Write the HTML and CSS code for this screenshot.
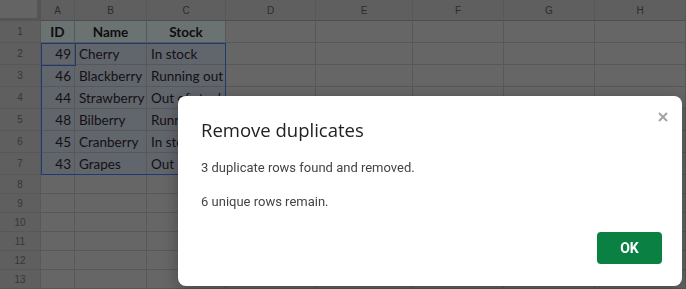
FILE: index.html
```html
<!DOCTYPE html>
<html lang="en">
<head>
  <meta charset="UTF-8">
  <meta name="viewport" content="width=device-width, initial-scale=1.0">
  <title>Remove duplicates</title>
  <link rel="stylesheet" href="styles.css">
</head>
<body>
  <div class="sheet">
    <div class="row head">
      <div class="corner"></div>
      <div>A</div><div>B</div><div>C</div><div>D</div><div>E</div><div>F</div><div>G</div><div>H</div>
    </div>
    <div class="row">
      <div class="num">1</div>
      <div class="hdr">ID</div><div class="hdr">Name</div><div class="hdr">Stock</div>
      <div></div><div></div><div></div><div></div><div></div>
    </div>
    <div class="row">
      <div class="num">2</div>
      <div class="sel right">49</div><div class="sel">Cherry</div><div class="sel">In stock</div>
      <div></div><div></div><div></div><div></div><div></div>
    </div>
    <div class="row">
      <div class="num">3</div>
      <div class="sel right">46</div><div class="sel">Blackberry</div><div class="sel">Running out</div>
      <div></div><div></div><div></div><div></div><div></div>
    </div>
    <div class="row">
      <div class="num">4</div>
      <div class="sel right">44</div><div class="sel">Strawberry</div><div class="sel">Out of stock</div>
      <div></div><div></div><div></div><div></div><div></div>
    </div>
    <div class="row">
      <div class="num">5</div>
      <div class="sel right">48</div><div class="sel">Bilberry</div><div class="sel">Running out</div>
      <div></div><div></div><div></div><div></div><div></div>
    </div>
    <div class="row">
      <div class="num">6</div>
      <div class="sel right">45</div><div class="sel">Cranberry</div><div class="sel">In stock</div>
      <div></div><div></div><div></div><div></div><div></div>
    </div>
    <div class="row">
      <div class="num">7</div>
      <div class="sel right">43</div><div class="sel">Grapes</div><div class="sel">Out of stock</div>
      <div></div><div></div><div></div><div></div><div></div>
    </div>
    <div class="row short">
      <div class="num">8</div>
      <div></div><div></div><div></div><div></div><div></div><div></div><div></div><div></div>
    </div>
    <div class="row short">
      <div class="num">9</div>
      <div></div><div></div><div></div><div></div><div></div><div></div><div></div><div></div>
    </div>
    <div class="row short">
      <div class="num">10</div>
      <div></div><div></div><div></div><div></div><div></div><div></div><div></div><div></div>
    </div>
    <div class="row short">
      <div class="num">11</div>
      <div></div><div></div><div></div><div></div><div></div><div></div><div></div><div></div>
    </div>
    <div class="row short">
      <div class="num">12</div>
      <div></div><div></div><div></div><div></div><div></div><div></div><div></div><div></div>
    </div>
    <div class="row short">
      <div class="num">13</div>
      <div></div><div></div><div></div><div></div><div></div><div></div><div></div><div></div>
    </div>

    <div class="selection"></div>
    <div class="active-cell"></div>
  </div>

  <div class="scrim">
    <div class="dialog">
      <svg class="close" viewBox="0 0 10 10" width="10" height="10">
        <path d="M1 1 L9 9 M9 1 L1 9" stroke="#a3a3a3" stroke-width="2" fill="none"/>
      </svg>
      <h2 class="dialog-title">Remove duplicates</h2>
      <p class="dialog-text">3 duplicate rows found and removed.</p>
      <p class="dialog-text">6 unique rows remain.</p>
      <div class="dialog-actions">
        <button class="btn-ok">OK</button>
      </div>
    </div>
  </div>
</body>
</html>
```

FILE: styles.css
```css
body {
  margin: 0;
  width: 686px;
  height: 289px;
  overflow: hidden;
  background: #666666;
  font-family: Lato, 'Liberation Sans', sans-serif;
}
.sheet {
  position: relative;
  display: flex;
  flex-direction: column;
}
.row {
  display: grid;
  grid-template-columns: 41px 34px 72px 79px 90px 97px 91px 91px 91px;
  height: 22px;
}
.row.short {
  height: 19px;
}
.row > div {
  box-sizing: border-box;
  display: flex;
  align-items: center;
  padding: 0 4px;
  white-space: nowrap;
  border-right: 1px solid #585858;
  border-bottom: 1px solid #585858;
  font-size: 13.5px;
  color: #141014;
}
.head {
  height: 21px;
}
.head > div {
  justify-content: center;
  background: #5f5f5f;
  border-bottom-color: #4e4e4e;
  font-family: 'Liberation Sans', Arial, sans-serif;
  font-size: 10px;
  color: #2c2c2c;
}
.head > .corner {
  background: #646464;
  border-right: 4px solid #555;
  border-bottom: 3px solid #555;
}
.row > .num {
  justify-content: center;
  background: #5f5f5f;
  font-family: 'Liberation Sans', Arial, sans-serif;
  font-size: 10px;
  color: #3a3434;
}
.row > .hdr {
  justify-content: center;
  background: #6a7272;
  font-weight: bold;
  color: #0e0e0e;
}
.row > .sel {
  background: #61656c;
}
.row > .right {
  justify-content: flex-end;
  padding-right: 3px;
}
.selection {
  position: absolute;
  left: 41px;
  top: 43px;
  width: 185px;
  height: 132px;
  box-sizing: border-box;
  border: 1px solid #1c3a74;
  pointer-events: none;
}
.active-cell {
  position: absolute;
  left: 41px;
  top: 43px;
  width: 35px;
  height: 23px;
  box-sizing: border-box;
  border: 1px solid #1c3a74;
  pointer-events: none;
}
.scrim {
  position: fixed;
  inset: 0;
}
.dialog {
  position: absolute;
  left: 178px;
  top: 96px;
  width: 504px;
  box-sizing: border-box;
  padding: 22px 20px 22px 23px;
  background: #fff;
  border-radius: 8px;
  box-shadow: 0 4px 16px rgba(0,0,0,0.3);
  display: flex;
  flex-direction: column;
}
.close {
  position: absolute;
  top: 16px;
  right: 14px;
}
.dialog-title {
  margin: 0 0 16px;
  font-family: 'Open Sans', sans-serif;
  font-weight: normal;
  font-size: 18.5px;
  line-height: 24px;
  color: #202124;
}
.dialog-text {
  margin: 0 0 14px;
  font-family: Roboto, sans-serif;
  font-size: 13px;
  line-height: 20px;
  color: #444;
}
.dialog-text:last-of-type {
  margin-bottom: 0;
}
.dialog-actions {
  display: flex;
  justify-content: flex-end;
  margin-top: 20px;
}
.btn-ok {
  width: 65px;
  height: 32px;
  border: none;
  border-radius: 4px;
  background: #0b8043;
  color: #fff;
  font-family: Roboto, sans-serif;
  font-weight: bold;
  font-size: 14px;
  cursor: pointer;
}
```
